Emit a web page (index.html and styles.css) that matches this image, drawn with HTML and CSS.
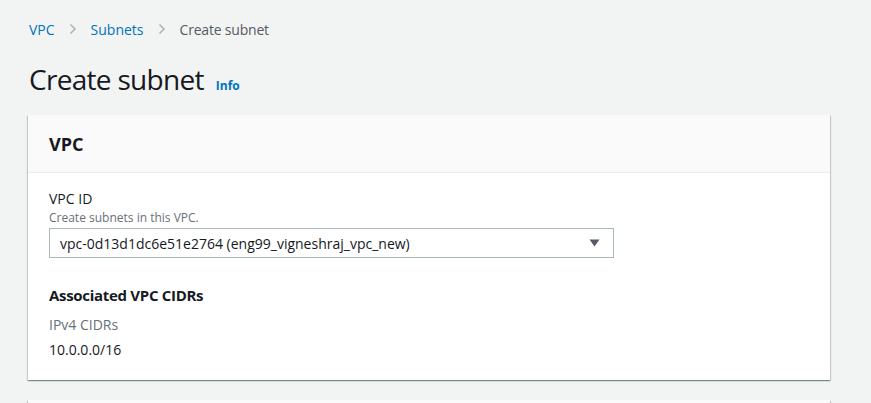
FILE: index.html
```html
<!DOCTYPE html>
<html lang="en">
<head>
<meta charset="utf-8">
<title>Create subnet</title>
<link rel="stylesheet" href="styles.css">
</head>
<body>
<div class="page">
  <nav class="breadcrumbs">
    <a class="crumb-link" href="#">VPC</a>
    <svg class="chev" width="10" height="14" viewBox="0 0 10 14"><path d="M2.5 2.5l4.5 4.5-4.5 4.5" fill="none" stroke="#aab7b8" stroke-width="1.6"/></svg>
    <a class="crumb-link" href="#">Subnets</a>
    <svg class="chev" width="10" height="14" viewBox="0 0 10 14"><path d="M2.5 2.5l4.5 4.5-4.5 4.5" fill="none" stroke="#aab7b8" stroke-width="1.6"/></svg>
    <span class="crumb-current">Create subnet</span>
  </nav>
  <header class="page-header">
    <h1 class="title">Create subnet</h1>
    <a class="info" href="#">Info</a>
  </header>
  <section class="card">
    <div class="card-header"><h2 class="card-title">VPC</h2></div>
    <div class="card-body">
      <div class="field">
        <div class="label">VPC ID</div>
        <div class="desc">Create subnets in this VPC.</div>
        <div class="select">
          <span class="select-text">vpc-0d13d1dc6e51e2764 (eng99_vigneshraj_vpc_new)</span>
          <svg class="caret" width="11" height="8" viewBox="0 0 11 8"><path d="M0.5 0.5h10l-5 7z" fill="#545b64"/></svg>
        </div>
      </div>
      <h3 class="sub-title">Associated VPC CIDRs</h3>
      <div class="kv-label">IPv4 CIDRs</div>
      <div class="kv-value">10.0.0.0/16</div>
    </div>
  </section>
  <section class="card card-next">
    <div class="card-header"></div>
  </section>
</div>
</body>
</html>
```

FILE: styles.css
```css
html, body {
  margin: 0;
  padding: 0;
  background: #f2f3f3;
  font-family: "Open Sans", "Noto Sans", sans-serif;
  color: #16191f;
  overflow: hidden;
}
.page {
  padding: 16px 41px 0 28px;
}
.breadcrumbs {
  display: flex;
  align-items: center;
  gap: 13px;
  height: 26px;
  padding-left: 1px;
  font-size: 14px;
}
.crumb-link {
  color: #0073bb;
  text-decoration: none;
  font-weight: 500;
}
.crumb-current {
  color: #545b64;
  letter-spacing: -0.2px;
}
.chev { display: block; }
.page-header {
  display: flex;
  align-items: baseline;
  gap: 12px;
  margin-top: 19px;
  padding-left: 1px;
}
.title {
  margin: 0;
  font-size: 28px;
  font-weight: 400;
  line-height: 36px;
  letter-spacing: -0.7px;
}
.info {
  color: #0073bb;
  font-size: 12px;
  font-weight: 700;
  text-decoration: none;
}
.card {
  margin-top: 18px;
  background: #fff;
  box-shadow: 0 1px 1px 0 rgba(0,28,36,0.3), 1px 1px 1px 0 rgba(0,28,36,0.15), -1px 1px 1px 0 rgba(0,28,36,0.15);
}
.card-header {
  background: #fafafa;
  border-bottom: 1px solid #eaeded;
  height: 57px;
  display: flex;
  align-items: center;
  padding: 0 21px;
}
.card-title {
  margin: 0;
  font-size: 18px;
  font-weight: 700;
}
.card-body {
  padding: 15px 21px 19px;
}
.label {
  font-size: 14px;
  line-height: 22px;
}
.desc {
  font-size: 12px;
  line-height: 16px;
  color: #687078;
}
.select {
  margin-top: 2px;
  width: 565px;
  height: 30px;
  border: 1px solid #aab7b8;
  display: flex;
  align-items: center;
  justify-content: space-between;
  padding: 0 13px 0 10px;
  box-sizing: border-box;
}
.select-text { font-size: 14px; }
.caret { display: block; }
.sub-title {
  margin: 26px 0 0;
  font-size: 15px;
  font-weight: 700;
  line-height: 22px;
  letter-spacing: -0.3px;
}
.kv-label {
  margin-top: 8px;
  font-size: 14px;
  color: #687078;
  line-height: 22px;
}
.kv-value {
  margin-top: 3px;
  font-size: 14px;
  line-height: 22px;
}
.card-next {
  margin-top: 20px;
}
```
